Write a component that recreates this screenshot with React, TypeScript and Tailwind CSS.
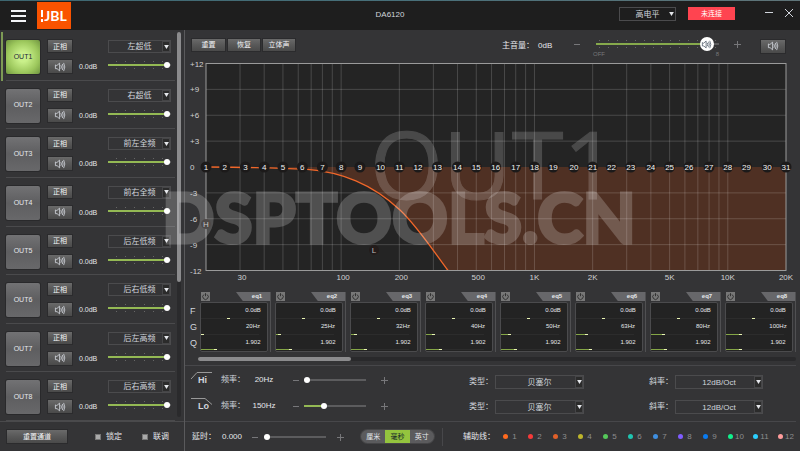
import React, { useState } from 'react';
import clsx from 'clsx';

const CHANNELS = ['左超低', '右超低', '前左全频', '前右全频', '后左低频', '后右低频', '后左高频', '后右高频'];

const EQ_BANDS = [
  { freq: '20Hz', pos: 0 },
  { freq: '25Hz', pos: 3 },
  { freq: '32Hz', pos: 6 },
  { freq: '40Hz', pos: 10 },
  { freq: '50Hz', pos: 13 },
  { freq: '63Hz', pos: 16 },
  { freq: '80Hz', pos: 20 },
  { freq: '100Hz', pos: 24 },
];

const CENTERS = [
  20, 25, 32, 40, 50, 63, 80, 100, 125, 160, 200, 250, 315, 400, 500, 630, 800,
  1000, 1250, 1600, 2000, 2500, 3150, 4000, 5000, 6300, 8000, 10000, 12500, 16000, 20000,
];

const GUIDE_COLORS = [
  'bg-[#ff6a1f]', 'bg-[#f53a3a]', 'bg-[#e0602a]', 'bg-[#bdb52c]', 'bg-[#55c85a]', 'bg-[#1fc4b0]',
  'bg-[#3f8fe0]', 'bg-[#7f5cff]', 'bg-[#0a7bf0]', 'bg-[#10f08c]', 'bg-[#2ccfff]', 'bg-[#ff9c9c]',
];

const btn =
  'flex items-center justify-center bg-gradient-to-b from-[#6a6a6a] via-[#585858] to-[#4a4a4a] text-[7px] leading-none text-gray-100 ring-1 ring-[#2b2b2d]';

const SpeakerIcon = ({ className }: { className?: string }) => (
  <svg viewBox="0 0 14 12" className={className} fill="none" stroke="currentColor" strokeWidth="1" strokeLinecap="round">
    <path d="M1.5 4v4h2l3 2.6V1.4L3.5 4z" strokeLinejoin="round" />
    <path d="M8.3 4.2q1 1.8 0 3.6M10 2.8q1.8 3.2 0 6.4M11.6 1.5q2.6 4.5 0 9" />
  </svg>
);

const PowerIcon = () => (
  <svg viewBox="0 0 10 10" className="size-[9px] bg-[#777] text-[#2a2a2a]" fill="none" stroke="currentColor">
    <path d="M3.3 2.8a3 3 0 1 0 3.4 0M5 1.3v3.4" strokeWidth="1" />
  </svg>
);

interface SelectProps {
  label: string;
  options: string[];
  className?: string;
  boxed?: boolean;
}

const Select: React.FC<SelectProps> = ({ label, options, className, boxed = true }) => (
  <div className={clsx('relative', className)}>
    <select
      aria-label={label}
      className="block h-full w-full appearance-none border border-[#4b4b4d] bg-transparent p-0 text-center text-[8px] leading-[11px] text-gray-300 [text-align-last:center]"
    >
      {options.map(o => (
        <option key={o}>{o}</option>
      ))}
    </select>
    <span
      className={clsx(
        'pointer-events-none absolute inset-y-px right-px flex w-2 items-center justify-center',
        boxed && 'border border-[#454547] bg-[#2b2b2b]'
      )}
    >
      <svg viewBox="0 0 6 5" className="h-1 w-[5px] shrink-0 fill-gray-200">
        <path d="M0 0h6L3 5z" />
      </svg>
    </span>
  </div>
);

interface SliderProps {
  label: string;
  initial: number;
  className?: string;
  ticks?: number;
  filled?: boolean;
}

const Slider: React.FC<SliderProps> = ({ label, initial, className, ticks = 0, filled = true }) => {
  const [value, setValue] = useState(initial);
  const color = filled ? '#94b954' : '#5c5c5e';
  return (
    <div className={clsx('relative flex items-center', className)}>
      {ticks > 0 && (
        <div className="absolute inset-x-2 flex h-2 justify-between">
          {Array.from({ length: ticks }, (_, i) => (
            <span key={i} className="w-px border-y border-[#666]" />
          ))}
        </div>
      )}
      <input
        type="range"
        aria-label={label}
        value={value}
        onChange={e => setValue(Number(e.target.value))}
        style={{ backgroundImage: `linear-gradient(to right, ${color} ${value}%, #5c5c5e ${value}%)` }}
        className="relative h-0.5 w-full appearance-none [&::-webkit-slider-thumb]:size-[6px] [&::-webkit-slider-thumb]:appearance-none [&::-webkit-slider-thumb]:rounded-full [&::-webkit-slider-thumb]:bg-white"
      />
    </div>
  );
};

// Thin value bar inside an eq band
const BandBar = ({ label, initial, filled = true }: { label: string; initial: number; filled?: boolean }) => {
  const [value, setValue] = useState(initial);
  return (
    <input
      type="range"
      aria-label={label}
      value={value}
      onChange={e => setValue(Number(e.target.value))}
      style={{ backgroundImage: `linear-gradient(to right, ${filled ? '#84a646' : '#2c2c2c'} ${value}%, #2c2c2c ${value}%)` }}
      className="block h-px w-[58px] appearance-none [&::-webkit-slider-thumb]:h-px [&::-webkit-slider-thumb]:w-[3px] [&::-webkit-slider-thumb]:appearance-none [&::-webkit-slider-thumb]:bg-[#eaf5b5]"
    />
  );
};

const StepButton = ({ sign, label }: { sign: '-' | '+'; label: string }) => (
  <button aria-label={label} className="flex size-[8px] items-center justify-center text-[#77777a]">
    <svg viewBox="0 0 8 8" className="size-full" stroke="currentColor" fill="none">
      <path d={sign === '+' ? 'M1 4.5h7M4.5 1v7' : 'M1 4.5h6'} />
    </svg>
  </button>
);

const Header = () => (
  <header className="flex h-[30px] items-start">
    <button aria-label="菜单" className="mt-[10px] ml-[11px] flex w-[15px] flex-col gap-[3px]">
      <span className="h-0.5 bg-gray-100" />
      <span className="h-0.5 bg-gray-100" />
      <span className="h-0.5 bg-gray-100" />
    </button>
    <div className="mt-0.5 ml-[11px] flex h-[27px] w-[34px] items-center justify-center bg-[#fa5300] text-white">
      <svg viewBox="0 0 3 12" className="mr-px h-3 w-[2px] fill-white" preserveAspectRatio="none">
        <path d="M0 0h3v7H0zM0 9h3v3H0z" />
      </svg>
      <span className="font-[Lato,sans-serif] text-[14px] leading-none font-bold">JBL</span>
    </div>
    <h1 className="flex-1 pt-[9px] pl-[90px] text-center text-[8px] leading-[11px] text-gray-300">DA6120</h1>
    <Select label="电平" options={['高电平', '低电平']} boxed={false} className="mt-[7px] h-[14px] w-[57px]" />
    <button className="mt-[7px] ml-3 h-[13px] w-[47px] bg-[#ff4450] text-[7px] leading-none text-white">未连接</button>
    <button aria-label="最小化" className="mt-[9px] ml-[30px] size-[8px] text-gray-300">
      <svg viewBox="0 0 8 8" className="size-full" stroke="currentColor"><path d="M0 3.5h8" /></svg>
    </button>
    <button aria-label="关闭" className="mt-[9px] mr-[7px] ml-3 size-[8px] text-gray-300">
      <svg viewBox="0 0 8 8" className="size-full" stroke="currentColor"><path d="M0 0l8 8M8 0L0 8" /></svg>
    </button>
  </header>
);

interface ChannelRowProps {
  index: number;
  name: string;
  active: boolean;
  onSelect: () => void;
}

const ChannelRow: React.FC<ChannelRowProps> = ({ index, name, active, onSelect }) => (
  <li className={clsx('flex flex-1 border-l-2', active ? 'border-[#7d9a55]' : 'border-transparent')}>
    <div className="ml-[3px] flex flex-1 items-start border-b border-[#4a4a4c] pt-2">
      <button
        onClick={onSelect}
        className={clsx(
          'h-[34px] w-[34px] rounded-xs text-[7px] ring-1 ring-[#29292b]',
          active
            ? 'bg-[radial-gradient(circle,#c9f08a_20%,#9cc75c_65%,#6f9440)] text-gray-800'
            : 'bg-gradient-to-b from-[#727274] via-[#5e5e60] to-[#68686a] text-gray-200'
        )}
      >
        OUT{index}
      </button>
      <div className="ml-2 flex flex-col gap-2">
        <button className={clsx(btn, 'h-3 w-6')}>正相</button>
        <button aria-label={`静音 OUT${index}`} className={clsx(btn, 'h-[13px] w-6')}>
          <SpeakerIcon className="h-[10px] w-3 text-gray-300" />
        </button>
      </div>
      <span className="mt-5 ml-[7px] w-[29px] text-[7px] leading-[13px] text-gray-200">0.0dB</span>
      <div className="flex w-[63px] flex-col gap-2">
        <Select label={`OUT${index} 类型`} options={[name]} className="h-[13px]" />
        <Slider label={`OUT${index} 音量`} initial={98} ticks={6} className="h-2" />
      </div>
    </div>
  </li>
);

const Sidebar = () => {
  const [active, setActive] = useState(0);
  return (
    <aside className="flex w-[185px] shrink-0 flex-col border-r border-[#5a5a5c]">
      <div className="flex flex-1 pt-0.5">
        <ul className="flex flex-1 flex-col pl-px">
          {CHANNELS.map((name, i) => (
            <ChannelRow key={name} index={i + 1} name={name} active={i === active} onSelect={() => setActive(i)} />
          ))}
        </ul>
        <div className="mr-[3px] mb-1 ml-0.5 w-1 rounded-full bg-[#2a2a2c]">
          <div className="h-[65%] rounded-full bg-[#8b8b8d]" />
        </div>
      </div>
      <div className="flex h-[30px] items-center border-t border-[#4a4a4c] pl-[7px] text-[8px] text-gray-200">
        <button className={clsx(btn, 'h-[13px] w-[60px]')}>重置通道</button>
        {['锁定', '联调'].map(t => (
          <label key={t} className="ml-7 flex items-center gap-[5px] last:ml-5">
            <input type="checkbox" className="size-[6px] appearance-none border border-[#777] bg-[#aaa] checked:bg-[#9ccb4f]" />
            {t}
          </label>
        ))}
      </div>
    </aside>
  );
};

const Toolbar = () => {
  const [volume, setVolume] = useState(95);
  return (
    <div className="flex h-8 items-center pr-[15px] pl-[7px] text-[8px] text-gray-200">
      <div className="flex gap-[3px] pb-[3px]">
        <button className={clsx(btn, 'h-3 w-[33px]')}>重置</button>
        <button className={clsx(btn, 'h-3 w-8')}>恢复</button>
        <button className={clsx(btn, 'h-3 w-8')}>立体声</button>
      </div>
      <label htmlFor="master" className="ml-auto">主音量：</label>
      <output htmlFor="master" className="ml-1 w-[35px]">0dB</output>
      <div className="flex items-center pb-1">
        <StepButton sign="-" label="音量减" />
        <div className="relative mr-[14px] ml-[15px] flex h-4 w-[123px] items-center">
          <div className="absolute inset-x-[3px] flex h-2 justify-between">
            {Array.from({ length: 14 }, (_, i) => (
              <span key={i} className="w-px border-y border-[#666]" />
            ))}
          </div>
          <input
            id="master"
            type="range"
            value={volume}
            onChange={e => setVolume(Number(e.target.value))}
            style={{ backgroundImage: `linear-gradient(to right, #86a94c ${volume}%, #5c5c5e ${volume}%)` }}
            className="relative h-0.5 w-full appearance-none [&::-webkit-slider-thumb]:size-[14px] [&::-webkit-slider-thumb]:appearance-none [&::-webkit-slider-thumb]:rounded-full [&::-webkit-slider-thumb]:bg-white"
          />
          <span
            className="pointer-events-none absolute flex size-[14px] items-center justify-center"
            style={{ left: `calc(${volume}% - ${(volume * 14) / 100}px)` }}
          >
            <SpeakerIcon className="h-[9px] w-[11px] text-gray-600" />
          </span>
          <div className="absolute inset-x-0 top-[14px] -ml-[3px] flex justify-between text-[6px] leading-[8px] text-[#77777a]">
            <span>OFF</span>
            <span>8</span>
          </div>
        </div>
        <StepButton sign="+" label="音量加" />
      </div>
      <button aria-label="静音" className={clsx(btn, 'ml-5 h-[13px] w-6')}>
        <SpeakerIcon className="h-[10px] w-3 text-gray-300" />
      </button>
    </div>
  );
};

const PLOT = { left: 21, right: 601, top: 1.5, bottom: 208.5 };
const xOf = (hz: number) => PLOT.left + ((PLOT.right - PLOT.left) * Math.log10(hz / 20)) / 3;
const yOf = (db: number) => PLOT.top + ((12 - db) * (PLOT.bottom - PLOT.top)) / 24;

const GRID_HZ = [10, 100, 1000, 10000]
  .flatMap(d => [1, 2, 3, 4, 5, 6, 7, 8, 9].map(n => n * d))
  .filter(hz => hz > 20 && hz < 20000);

const HZ_LABELS: [number, string][] = [
  [30, '30'], [100, '100'], [200, '200'], [500, '500'], [1000, '1K'],
  [2000, '2K'], [5000, '5K'], [10000, '10K'], [20000, '20K'],
];

const CURVE = 'M21 105C75 105.3 98 106 120 107.2C157 110 187 122 215 148C232 164 247 187 263 208.5';

const ResponseChart = () => (
  <svg viewBox="0 0 615 222" className="block w-full overflow-visible" fontSize="8" role="img" aria-label="OUT1 频率响应">
    <rect x="21" y="1.5" width="580" height="207" fill="#242424" />
    <path d={`${CURVE}H601V105z`} fill="#4f3023" />
    <text
      x="185"
      y="137"
      fontSize="94"
      className="font-['Open_Sans',sans-serif]"
      fill="#fff"
      stroke="#fff"
      opacity="0.17"
    >
      OUT1
    </text>
    <g stroke="#fff" strokeOpacity="0.17">
      {GRID_HZ.map(hz => (
        <line key={hz} x1={xOf(hz)} x2={xOf(hz)} y1={PLOT.top} y2={PLOT.bottom} />
      ))}
      {[9, 6, 3, -3, -6, -9].map(db => (
        <line key={db} x1={PLOT.left} x2={PLOT.right} y1={yOf(db)} y2={yOf(db)} />
      ))}
    </g>
    <path d={CURVE} fill="none" stroke="#f0672a" strokeWidth="1.3" />
    <rect x="21" y="1.5" width="580" height="207" fill="none" stroke="#9a9a9a" />
    <g fill="#d0d0d0">
      {[12, 9, 6, 3, 0, -3, -6, -9, -12].map(db => (
        <text key={db} x="5" y={yOf(db) + 3}>{db > 0 ? `+${db}` : db}</text>
      ))}
      {HZ_LABELS.map(([hz, text]) => (
        <text key={hz} x={xOf(hz) + (hz < 1000 ? 2 : 0)} y="218" textAnchor="middle">{text}</text>
      ))}
    </g>
    <g textAnchor="middle" fill="#f2f2f2">
      {CENTERS.map((hz, i) => (
        <g key={hz}>
          <circle cx={xOf(hz)} cy="105" r="5.5" fill="#1c1a1a" />
          <text x={xOf(hz)} y="108">{i + 1}</text>
        </g>
      ))}
      <circle cx="21" cy="162" r="5" fill="#231c1b" />
      <text x="21" y="165" fill="#bbb">H</text>
      <circle cx="189" cy="188" r="5" fill="#231c1b" />
      <text x="189" y="191" fill="#bbb">L</text>
    </g>
  </svg>
);

const EqStrip = () => (
  <section className="pt-2 pr-1">
    <div className="flex">
      <div className="flex w-[15px] flex-col pt-[11px] pl-[5px] text-[9px] leading-4 text-gray-300">
        <span>F</span>
        <span>G</span>
        <span>Q</span>
      </div>
      <div className="grid flex-1 grid-cols-8 gap-1">
        {EQ_BANDS.map((band, i) => (
          <div key={band.freq} className="border-r border-[#505052] pr-[2px]">
            <div className="flex h-[9px] items-center justify-between">
              <button aria-label={`eq${i + 1} 开关`} className="ml-px">
                <PowerIcon />
              </button>
              <span className="-mr-[2px] h-[9px] w-[34px] bg-[#67676a] pl-2 text-center text-[6px] leading-[9px] font-bold text-gray-200 [clip-path:polygon(0_0,100%_0,100%_100%,20%_100%)]">
                eq{i + 1}
              </span>
            </div>
            <div className="mt-px h-[50px] rounded-xs border border-[#4b4b4d] bg-[#232323] text-[6px] text-gray-200">
              <p className="pl-[38px] text-center leading-[15px]">0.0dB</p>
              <BandBar label={`eq${i + 1} G`} initial={48} filled={false} />
              <p className="pl-[38px] text-center leading-[15px]">{band.freq}</p>
              <BandBar label={`eq${i + 1} F`} initial={band.pos} />
              <p className="pl-[38px] text-center leading-[14px]">1.902</p>
              <BandBar label={`eq${i + 1} Q`} initial={24} />
            </div>
          </div>
        ))}
      </div>
    </div>
    <div className="mt-[5px] mb-1 ml-[13px] h-1 rounded-full bg-[#29292b]">
      <div className="h-1 w-[153px] rounded-full bg-[#8b8b8d]" />
    </div>
  </section>
);

interface FilterRowProps {
  name: string;
  path: string;
  value: string;
  pos: number;
}

const FilterRow: React.FC<FilterRowProps> = ({ name, path, value, pos }) => (
  <div className="flex h-[26px] items-center text-[8px] text-gray-200">
    <div className="relative w-[22px] pl-[7px] text-[9px] font-bold text-gray-300">
      <svg viewBox="0 0 22 8" className="absolute -top-px left-0 h-2 w-[22px]" fill="none" stroke="#999">
        <path d={path} />
      </svg>
      <span className="block leading-[14px]">{name}</span>
    </div>
    <span className="ml-2 w-[31px] text-gray-300">频率：</span>
    <output className="w-6 text-center">{value}</output>
    <div className="ml-4 flex items-center">
      <StepButton sign="-" label={`${name} 减`} />
      <Slider label={`${name} 频率`} initial={pos} className="mr-[14px] ml-1 w-[62px]" />
      <StepButton sign="+" label={`${name} 加`} />
    </div>
  </div>
);

const Filters = () => (
  <section className="mr-1 flex h-14 justify-between border-t border-[#47474a] pr-[33px] pl-[6px]">
    <div className="pt-px">
      <FilterRow name="Hi" path="M0 7L6 .5H21" value="20Hz" pos={0} />
      <FilterRow name="Lo" path="M0 .5H14L21 6.5" value="150Hz" pos={30} />
    </div>
    <div className="flex flex-col gap-[11px] pt-[9px] text-[8px] text-gray-300">
      {['Hi', 'Lo'].map(f => (
        <div key={f} className="flex h-[14px] items-center">
          <span className="w-[26px]">类型：</span>
          <Select label={`${f} 类型`} options={['贝塞尔', '巴特沃斯']} className="h-[14px] w-[89px]" />
          <span className="ml-[65px] w-[26px]">斜率：</span>
          <Select label={`${f} 斜率`} options={['12dB/Oct', '24dB/Oct']} className="h-[14px] w-[88px]" />
        </div>
      ))}
    </div>
  </section>
);

const FooterBar = () => {
  const [unit, setUnit] = useState('毫秒');
  return (
    <footer className="mr-1 flex h-[30px] items-center border-t border-[#47474a] pl-[7px] text-[8px] text-gray-200">
      <span className="w-[30px]">延时：</span>
      <output className="w-[29px]">0.000</output>
      <StepButton sign="-" label="延时减" />
      <Slider label="延时" initial={0} className="mr-[10px] ml-[5px] w-[62px]" />
      <StepButton sign="+" label="延时加" />
      <div className="ml-[17px] flex h-[13px] w-[73px] overflow-hidden rounded-full bg-[#5b5b5d] ring-1 ring-[#454547]">
        {['厘米', '毫秒', '英寸'].map(u => (
          <button
            key={u}
            onClick={() => setUnit(u)}
            className={clsx('flex-1 text-[7px] leading-none', u === unit && 'bg-[#94c43e] text-gray-900')}
          >
            {u}
          </button>
        ))}
      </div>
      <span className="ml-2 h-[18px] w-px bg-[#47474a]" />
      <span className="ml-5 w-10">辅助线：</span>
      <ul className="flex flex-1 justify-between text-[#8c8c8e]">
        {GUIDE_COLORS.map((c, i) => (
          <li key={c} className="flex w-[18px] items-center">
            <span className={clsx('size-[5px] shrink-0 rounded-full', c)} />
            <span className="flex-1 text-center">{i + 1}</span>
          </li>
        ))}
      </ul>
    </footer>
  );
};

export default function App() {
  return (
    <div className="relative flex min-h-screen flex-col overflow-hidden bg-[#343436] font-['Liberation_Sans','Noto_Sans_CJK_SC',sans-serif]">
      <div className="bg-[#1e1e1e] bg-gradient-to-r from-[#3d6670] via-[#48707a] to-[#5f7478] bg-[length:100%_1px] bg-no-repeat">
        <Header />
      </div>
      <div className="flex flex-1">
        <Sidebar />
        <main className="flex min-w-0 flex-1 flex-col">
          <Toolbar />
          <ResponseChart />
          <EqStrip />
          <Filters />
          <FooterBar />
        </main>
      </div>
      <p className="pointer-events-none absolute top-[182px] left-[162px] font-[Lato,sans-serif] text-[69px] leading-[70px] font-black text-white opacity-20 [-webkit-text-stroke:3px_white]">
        DSPTOOLS.CN
      </p>
    </div>
  );
}
